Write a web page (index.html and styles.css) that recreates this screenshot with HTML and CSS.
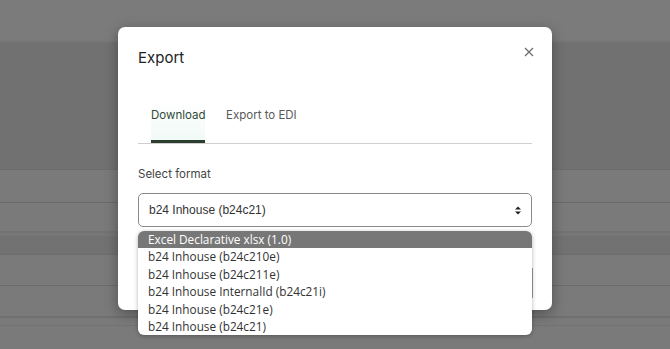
FILE: index.html
```html
<!DOCTYPE html>
<html>
<head>
<meta charset="utf-8">
<link rel="stylesheet" href="styles.css">
</head>
<body>
<div class="page">
  <div class="bg-top"></div>
  <div class="bg-band"></div>
  <div class="bg-row r1"></div>
  <div class="bg-row r2"></div>
  <div class="bg-row r3"></div>
  <div class="bg-row r4"></div>
  <div class="bg-row r5"></div>
  <div class="bg-row r6"></div>
  <div class="bg-row r7"></div>
</div>

<div class="modal">
  <div class="modal-head">
    <h2 class="title">Export</h2>
    <button class="close" aria-label="Close">
      <svg width="10" height="10" viewBox="0 0 10 10"><path d="M1 1L9 9M9 1L1 9" stroke="#6f6f6f" stroke-width="1.3" fill="none"/></svg>
    </button>
  </div>
  <div class="tabs">
    <div class="tab active">Download</div>
    <div class="tab">Export to EDI</div>
  </div>
  <div class="field">
    <label class="label">Select format</label>
    <div class="select">
      <span>b24 Inhouse (b24c21)</span>
      <svg width="8" height="11" viewBox="0 0 8 11"><path d="M4 1.5L7 4.5H1Z M4 9.5L7 6.5H1Z" fill="#222"/></svg>
    </div>
  </div>
  <div class="footer">
    <div class="btn-ghost"></div>
  </div>
</div>

<ul class="dropdown">
  <li class="opt selected">Excel Declarative xlsx (1.0)</li>
  <li class="opt">b24 Inhouse (b24c210e)</li>
  <li class="opt">b24 Inhouse (b24c211e)</li>
  <li class="opt">b24 Inhouse InternalId (b24c21i)</li>
  <li class="opt">b24 Inhouse (b24c21e)</li>
  <li class="opt">b24 Inhouse (b24c21)</li>
</ul>
</body>
</html>
```

FILE: styles.css
```css
* { box-sizing: border-box; }
html, body { margin: 0; padding: 0; }
body {
  width: 670px;
  height: 349px;
  overflow: hidden;
  background: #7a7a7a;
  font-family: Inter, "Liberation Sans", sans-serif;
  position: relative;
}
.page { display: flex; flex-direction: column; }
.bg-top { height: 43px; background: #7b7b7b; border-bottom: 2px solid #757575; }
.bg-band { height: 127px; background: #717171; border-bottom: 1px solid #6d6d6d; }
.bg-row { background: #7a7a7a; }
.r1 { height: 33px; border-bottom: 1px solid #6a6a6a; }
.r2 { height: 30px; border-bottom: 2px solid #737373; }
.r3 { height: 3px; background: #777; }
.r4 { height: 19px; background: #727272; border-bottom: 1px solid #6d6d6d; }
.r5 { height: 31px; border-bottom: 1px solid #6c6c6c; }
.r6 { height: 32px; border-bottom: 2px solid #6f6f6f; }
.r7 { height: 8px; border-bottom: 1px solid #727272; }

.modal {
  position: absolute;
  left: 118px;
  top: 27px;
  width: 434px;
  height: 283px;
  background: #fff;
  border-radius: 7px;
  box-shadow: 0 4px 14px rgba(0,0,0,0.35);
  padding: 0 20px 0 20px;
  display: flex;
  flex-direction: column;
}
.modal-head {
  display: flex;
  justify-content: space-between;
  align-items: flex-start;
  padding-top: 20px;
}
.title {
  margin: 0;
  font-size: 15px;
  font-weight: 400;
  color: #222;
  line-height: 22px;
}
.close {
  border: 0;
  background: none;
  padding: 0;
  margin: 0 -2px 0 0;
  width: 10px;
  height: 10px;
  display: flex;
  align-items: center;
  justify-content: center;
}
.tabs {
  display: flex;
  margin-top: 30px;
  border-bottom: 1px solid #cfcfcf;
  padding-left: 13px;
}
.tab {
  font-size: 11.5px;
  color: #5a5a5a;
  padding: 9px 0 0 0;
  height: 44px;
  line-height: 15px;
}
.tab + .tab { margin-left: 21px; }
.tab.active {
  color: #2f4a36;
  background: linear-gradient(#fff, #f1faf7);
  border-bottom: 3px solid #2c3f2f;
  width: 54px;
  margin-bottom: -1px;
}
.field { margin-top: 22px; display: flex; flex-direction: column; }
.label {
  font-size: 11.5px;
  color: #444;
  line-height: 16px;
}
.select {
  margin-top: 11px;
  height: 34px;
  border: 1px solid #8a8a8a;
  border-radius: 5px;
  display: flex;
  align-items: center;
  justify-content: space-between;
  padding: 0 9px 0 10px;
  font-family: "Liberation Sans", Arial, sans-serif;
  font-size: 12px;
  color: #333;
}
.footer { flex: 1; display: flex; justify-content: flex-end; align-items: flex-start; padding-top: 41px; }
.btn-ghost {
  width: 4px;
  height: 30px;
  border-right: 2px solid #9a9a9a;
  margin-right: -1px;
}

.dropdown {
  position: absolute;
  left: 138px;
  top: 231px;
  width: 394px;
  margin: 0;
  padding: 0;
  list-style: none;
  background: #fff;
  border-radius: 6px;
  box-shadow: 0 1px 4px rgba(0,0,0,0.3);
  overflow: hidden;
  font-family: "Open Sans", "Liberation Sans", sans-serif;
  font-size: 11.8px;
  color: #333;
}
.opt {
  height: 17.4px;
  line-height: 17.4px;
  padding-left: 10px;
}
.opt.selected {
  background: #777;
  color: #fff;
}
```
